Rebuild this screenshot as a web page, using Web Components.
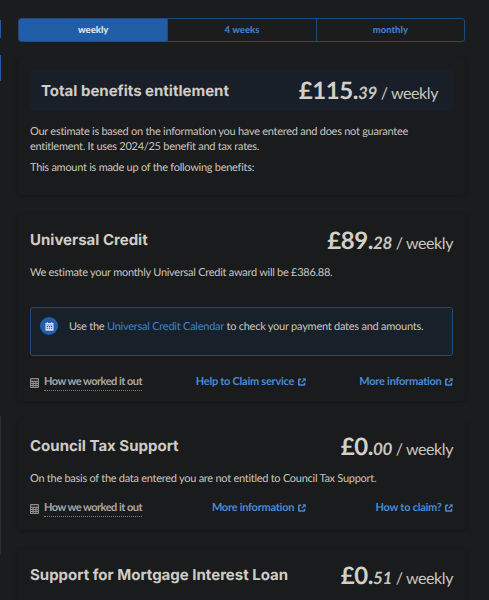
<!DOCTYPE html>
<html lang="en">
<head>
<meta charset="utf-8">
<title>Results</title>
<style>
  html, body { margin: 0; height: 600px; overflow: hidden; background: #1a1c1e; }
  body { font-family: "Lato", sans-serif; color: #c9c6bf; text-rendering: geometricPrecision; }
</style>
</head>
<body>
<results-page>
  <period-tabs></period-tabs>
  <total-card pounds="115" pence="39">
    <p>Our estimate is based on the information you have entered and does not guarantee entitlement. It uses 2024/25 benefit and tax rates.</p>
    <p>This amount is made up of the following benefits:</p>
  </total-card>
  <benefit-card heading="Universal Credit" pounds="89" pence="28">
    <p class="gap">We estimate your monthly Universal Credit award will be £386.88.</p>
    <calendar-note></calendar-note>
    <card-links first="Help to Claim service" second="More information"></card-links>
  </benefit-card>
  <benefit-card heading="Council Tax Support" pounds="0" pence="00" style="padding-bottom:15.5px">
    <p>On the basis of the data entered you are not entitled to Council Tax Support.</p>
    <card-links first="More information" second="How to claim?"></card-links>
  </benefit-card>
  <benefit-card heading="Support for Mortgage Interest Loan" pounds="0" pence="51"></benefit-card>
</results-page>

<script>
const extIcon = `<svg class="ext" viewBox="0 0 10 10" width="8" height="8" aria-hidden="true"><path d="M4 1.6H1.6a.6.6 0 0 0-.6.6v6a.6.6 0 0 0 .6.6h6a.6.6 0 0 0 .6-.6V6" fill="none" stroke="currentColor" stroke-width="2"/><path d="M5.4.4h4.2v4.2L8 3 5 6 4 5l3-3z" fill="currentColor"/></svg>`;

class ResultsPage extends HTMLElement {
  constructor() {
    super();
    this.attachShadow({ mode: "open" }).innerHTML = `
      <style>
        :host { display: flex; flex-direction: column; gap: 19px; padding: 18px 24px 0 18px; position: relative; }
        .edge { position: absolute; left: 0; width: 1px; background: #1f5ca8; }
        .grey { background: #2b2d2f; }
      </style>
      <div class="edge" style="top:20px;height:18px"></div>
      <div class="edge" style="top:55px;height:26px"></div>
      <div class="edge grey" style="top:416px;height:138px"></div>
      <slot></slot>`;
  }
}

class PeriodTabs extends HTMLElement {
  constructor() {
    super();
    this.attachShadow({ mode: "open" }).innerHTML = `
      <style>
        :host { display: grid; grid-template-columns: repeat(3, 1fr); height: 24px; box-sizing: border-box; border: 1px solid #1d4a80; border-radius: 3px; overflow: hidden; font: 900 9.5px/20px "Lato", sans-serif; color: #3f7fc9; margin-bottom: -4px; }
        div { display: flex; align-items: center; justify-content: center; padding-top: 1px; }
        div + div { border-left: 1px solid #1d4a80; }
        .on { background: #225ea8; color: #dfe6f0; }
      </style>
      <div class="on">weekly</div><div>4 weeks</div><div>monthly</div>`;
  }
}

const cardStyle = `
  :host { display: block; background: #191b1d; border-radius: 4px; box-shadow: 0 1px 4px #141516; padding: 16px 12px 12.5px; font-size: 11px; line-height: 14.5px; letter-spacing: -.27px; }
  .head { display: flex; justify-content: space-between; align-items: flex-start; letter-spacing: 0; }
  h2 { margin: 0; font: 700 15px/20px "Inter", sans-serif; color: #cfccc5; }
  .amount { color: #c9c6bf; font-size: 16px; line-height: 24px; letter-spacing: -.4px; white-space: nowrap; margin-top: -1px; }
  .amount b { font-size: 24px; font-weight: 700; color: #d3d0c9; }
  .amount i { font-size: 17px; font-weight: 700; }
  ::slotted(p) { margin: 0 0 7px; }
`;

function amount(el) {
  return `<div class="amount"><b>£${el.getAttribute("pounds")}.</b><i>${el.getAttribute("pence")}</i> / weekly</div>`;
}

class TotalCard extends HTMLElement {
  connectedCallback() {
    this.attachShadow({ mode: "open" }).innerHTML = `
      <style>${cardStyle}
        :host { padding: 12px 12px 12.5px; }
        .head { background: #191f28; border-radius: 3px; padding: 1px 15px 0 11px; margin-bottom: 14px; height: 42px; box-sizing: border-box; align-items: center; }
        .amount { margin-top: 3px; }
      </style>
      <div class="head"><h2>Total benefits entitlement</h2>${amount(this)}</div>
      <slot></slot>`;
  }
}

class BenefitCard extends HTMLElement {
  connectedCallback() {
    this.attachShadow({ mode: "open" }).innerHTML = `
      <style>${cardStyle}
        .head { height: 20px; margin-bottom: 16px; }
        ::slotted(p) { margin-bottom: 14px; }
        ::slotted(p.gap) { margin-bottom: 26.5px; }
      </style>
      <div class="head"><h2>${this.getAttribute("heading")}</h2>${amount(this)}</div>
      <slot></slot>`;
  }
}

class CalendarNote extends HTMLElement {
  constructor() {
    super();
    this.attachShadow({ mode: "open" }).innerHTML = `
      <style>
        :host { display: flex; gap: 11px; height: 49px; box-sizing: border-box; background: #18202a; border: 1px solid #1d4a80; border-radius: 3px; padding: 9px 9px; font-size: 11px; line-height: 18px; letter-spacing: -.24px; margin-bottom: 18.5px; }
        .dot { width: 18px; height: 18px; border-radius: 50%; background: #225ea8; display: flex; align-items: center; justify-content: center; flex: none; }
        .text { padding-top: 1px; }
        a { color: #3f82cf; text-decoration: none; }
      </style>
      <span class="dot"><svg viewBox="0 0 10 10" width="9" height="9"><path fill="#d5dcf0" d="M2 0h1v1h4V0h1v1h1.5v8.8H.5V1H2zM1.5 3.6h7V3h-7zM2 4.5v1h1.3v-1zm2.3 0v1h1.4v-1zm2.4 0v1H8v-1zM2 6.5v1h1.3v-1zm2.3 0v1h1.4v-1zm2.4 0v1H8v-1z" fill-rule="evenodd"/></svg></span>
      <span class="text">Use the <a href="#">Universal Credit Calendar</a> to check your payment dates and amounts.</span>`;
  }
}

class CardLinks extends HTMLElement {
  connectedCallback() {
    this.attachShadow({ mode: "open" }).innerHTML = `
      <style>
        :host { display: flex; justify-content: space-between; align-items: flex-start; font-size: 11px; line-height: 14px; font-weight: 700; letter-spacing: -.25px; }
        .how { display: flex; gap: 5px; color: #aaa7a1; height: 14px; letter-spacing: -.52px; }
        .how span { border-bottom: 1px dotted #807e7a; padding-bottom: 1px; height: 14px; }
        .how svg { margin-top: 3px; }
        a { color: #4a8ad4; text-decoration: none; }
        .ext { margin-left: 1px; vertical-align: -1px; }
      </style>
      <div class="how"><svg viewBox="0 0 9 10" width="9" height="10"><path fill="#8f8d88" fill-rule="evenodd" d="M1 0h7a1 1 0 0 1 1 1v8a1 1 0 0 1-1 1H1a1 1 0 0 1-1-1V1a1 1 0 0 1 1-1zm.2 1.2v1.6h6.6V1.2zm0 2.8v1h1.3V4zm2.6 0v1h1.4V4zm2.7 0v1h1.3V4zM1.2 6v1h1.3V6zm2.6 0v1h1.4V6zm2.7 0v1h1.3V6zM1.2 8v1h1.3V8zm2.6 0v1h1.4V8zm2.7 0v1h1.3V8z"/></svg><span>How we worked it out</span></div>
      <a href="#">${this.getAttribute("first")} ${extIcon}</a>
      <a href="#">${this.getAttribute("second")} ${extIcon}</a>`;
  }
}

customElements.define("results-page", ResultsPage);
customElements.define("period-tabs", PeriodTabs);
customElements.define("total-card", TotalCard);
customElements.define("benefit-card", BenefitCard);
customElements.define("calendar-note", CalendarNote);
customElements.define("card-links", CardLinks);
</script>
</body>
</html>
